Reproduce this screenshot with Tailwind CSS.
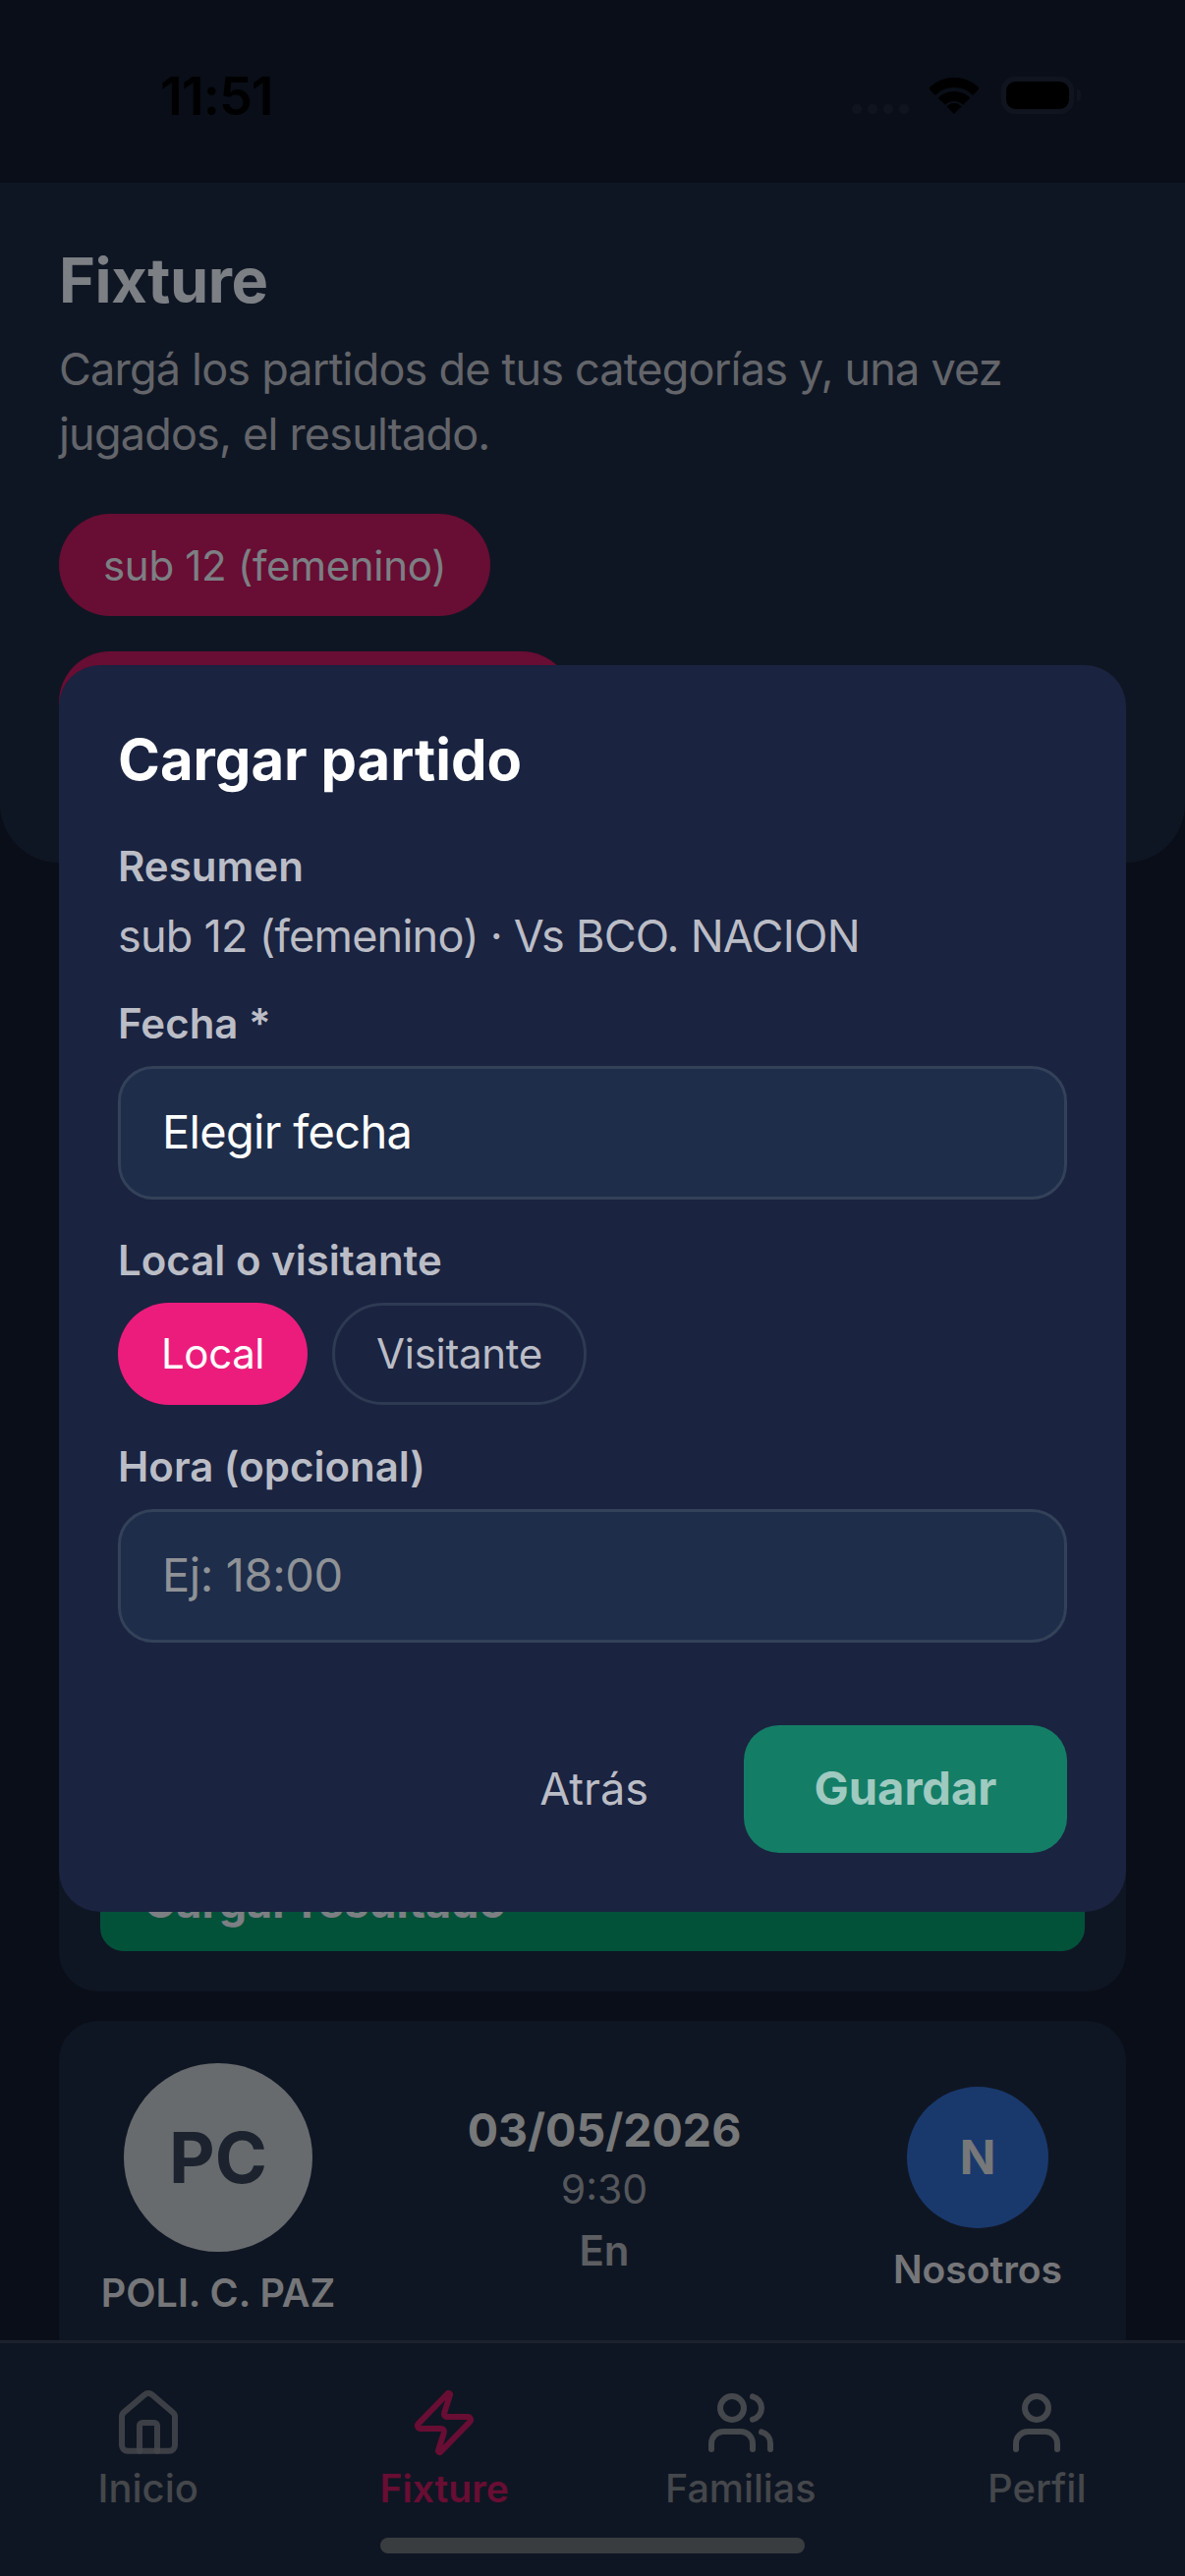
<!doctype html>
<html lang="es">
<head>
<meta charset="utf-8">
<script src="https://cdn.jsdelivr.net/npm/@tailwindcss/browser@4"></script>
</head>
<body class="bg-[#121a2c]">
<div class="relative w-[1206px] h-[2622px] overflow-hidden bg-[#121a2c] font-['Inter','Liberation_Sans',sans-serif]">

  <!-- status bar -->
  <div class="h-[186px] flex items-start justify-between text-black">
    <div class="mt-[68px] ml-[163px] text-[54px] leading-[60px] font-semibold tracking-[-1px]">11:51</div>
    <div class="mt-[78px] mr-[106px] flex items-start">
      <div class="mt-[28px] flex gap-[6px]">
        <span class="w-[10px] h-[10px] rounded-full bg-[#1d2638]"></span>
        <span class="w-[10px] h-[10px] rounded-full bg-[#1d2638]"></span>
        <span class="w-[10px] h-[10px] rounded-full bg-[#1d2638]"></span>
        <span class="w-[10px] h-[10px] rounded-full bg-[#1d2638]"></span>
      </div>
      <svg class="ml-[21px]" width="50" height="38" viewBox="0 0 50 38" fill="none" stroke="#000">
        <path d="M2.4 15.4 A32 32 0 0 1 47.6 15.4" stroke-width="10"/>
        <path d="M12.3 25.3 A18 18 0 0 1 37.7 25.3" stroke-width="10"/>
        <path d="M25 38 L17.5 30.5 A10 10 0 0 1 32.5 30.5 Z" fill="#000" stroke="none"/>
      </svg>
      <div class="ml-[23px] flex items-center">
        <div class="w-[74px] h-[38px] rounded-[14px] border-[5px] border-[#1d2638] bg-black bg-clip-padding"></div>
        <div class="ml-[3px] w-[4px] h-[12px] rounded-r-full bg-[#1d2638]"></div>
      </div>
    </div>
  </div>

  <!-- header -->
  <div class="h-[692px] bg-[#1d2840] rounded-b-[60px] px-[60px] pt-[63px] overflow-hidden">
    <h1 class="text-[63px] leading-[72px] font-bold tracking-[-0.4px] text-[#e2e8f0]">Fixture</h1>
    <p class="mt-[22px] text-[45px] leading-[66px] tracking-[-0.8px] text-[#b4b9c2] w-[1010px]">Cargá los partidos de tus categorías y, una vez jugados, el resultado.</p>
    <div class="mt-[48px] flex flex-col items-start gap-[36px]">
      <div class="h-[104px] px-[45px] flex items-center rounded-full bg-[#be185d] text-[42px] tracking-[-0.3px] text-[#e2e8f0]">sub 12 (femenino)</div>
      <div class="h-[104px] w-[523px] rounded-[52px] bg-[#be185d]"></div>
    </div>
  </div>

  <!-- card behind modal -->
  <div class="mx-[60px] mt-[30px] h-[1119px] rounded-[40px] bg-[#1d2840] flex flex-col justify-end px-[42px] pb-[41px]">
    <div class="h-[100px] rounded-[24px] bg-[#059669] px-[44px] flex items-center text-[45px] font-bold text-[#e2e8f0]">Cargar resultado</div>
  </div>

  <!-- match card -->
  <div class="mx-[60px] mt-[30px] h-[400px] rounded-t-[40px] bg-[#1d2840] flex items-start px-[42px] pt-[43px] text-[#e2e8f0]">
    <div class="w-[240px] shrink-0 flex flex-col items-center">
      <div class="w-[192px] h-[192px] rounded-full bg-[#bdc4c8] flex items-center justify-center text-[72px] font-bold text-[#334155]">PC</div>
      <div class="mt-[20px] text-[39.5px] leading-[44px] font-semibold text-[#d5d8dc] whitespace-nowrap">POLI. C. PAZ</div>
    </div>
    <div class="ml-[93px] w-[360px] shrink-0 flex flex-col items-center">
      <div class="mt-[44px] text-[46.5px] leading-[48px] font-bold text-[#d8dadd]">03/05/2026</div>
      <div class="mt-[12px] text-[41px] leading-[48px] text-[#9a9ea6]">9:30</div>
      <div class="mt-[14px] text-[42px] leading-[50px] font-semibold text-[#a8acb2]">En</div>
    </div>
    <div class="ml-[90px] w-[220px] shrink-0 flex flex-col items-center pt-[24px]">
      <div class="w-[144px] h-[144px] rounded-full bg-[#2f69c7] flex items-center justify-center text-[48px] font-bold text-[#d8dadd]">N</div>
      <div class="mt-[20px] text-[39px] leading-[44px] font-semibold text-[#d5d8dc]">Nosotros</div>
    </div>
  </div>

  <!-- tab bar -->
  <div class="absolute left-0 right-0 bottom-0 h-[240px] bg-[#1d2840] border-t-[3px] border-[#334155]">
    <div class="grid grid-cols-4 pt-[45px]">
      <div class="flex flex-col items-center text-[#7c8189]">
        <svg class="w-[72px] h-[72px]" viewBox="0 0 24 24" fill="none" stroke="#7c8189" stroke-opacity="0.85" stroke-width="2" stroke-linecap="round" stroke-linejoin="round"><path d="M15 21.6v-8.6a1 1 0 0 0-1-1h-4a1 1 0 0 0-1 1v8.6"/><path d="M3 10a2 2 0 0 1 .709-1.528l7-5.999a2 2 0 0 1 2.582 0l7 5.999A2 2 0 0 1 21 10v9.6a2 2 0 0 1-2 2H5a2 2 0 0 1-2-2z"/></svg>
        <span class="mt-[9px] text-[40px] leading-[44px] font-medium">Inicio</span>
      </div>
      <div class="flex flex-col items-center text-[#be185d]">
        <svg class="w-[72px] h-[72px]" viewBox="0 0 24 24" fill="none" stroke="#be185d" stroke-width="2" stroke-linecap="round" stroke-linejoin="round"><path d="M4 14a1 1 0 0 1-.78-1.63l9.9-10.2a.5.5 0 0 1 .86.46l-1.92 6.02A1 1 0 0 0 13 10h7a1 1 0 0 1 .78 1.63l-9.9 10.2a.5.5 0 0 1-.86-.46l1.92-6.02A1 1 0 0 0 11 14z"/></svg>
        <span class="mt-[9px] text-[39px] leading-[44px] font-semibold">Fixture</span>
      </div>
      <div class="flex flex-col items-center text-[#7c8189]">
        <svg class="w-[72px] h-[72px]" viewBox="0 0 24 24" fill="none" stroke="#7c8189" stroke-width="2" stroke-linecap="round" stroke-linejoin="round"><path d="M16 21v-2a4 4 0 0 0-4-4H6a4 4 0 0 0-4 4v2"/><circle cx="9" cy="7" r="4"/><path d="M22 21v-2a4 4 0 0 0-3-3.87"/><path d="M16 3.13a4 4 0 0 1 0 7.75"/></svg>
        <span class="mt-[9px] text-[39.5px] leading-[44px] font-medium">Familias</span>
      </div>
      <div class="flex flex-col items-center text-[#7c8189]">
        <svg class="w-[72px] h-[72px]" viewBox="0 0 24 24" fill="none" stroke="#7c8189" stroke-width="2" stroke-linecap="round" stroke-linejoin="round"><path d="M19 21v-2a4 4 0 0 0-4-4H9a4 4 0 0 0-4 4v2"/><circle cx="12" cy="7" r="4"/></svg>
        <span class="mt-[9px] text-[40px] leading-[44px] font-medium">Perfil</span>
      </div>
    </div>
    <div class="absolute left-[387px] top-[198px] w-[432px] h-[16px] rounded-full bg-[#6b6f76]"></div>
  </div>

  <!-- modal overlay -->
  <div class="absolute inset-0 bg-black/45 flex items-center justify-center">
    <div class="w-[1086px] h-[1269px] rounded-[42px] bg-[#1a2340] px-[60px] pt-[62px] flex flex-col">
      <h2 class="text-[58px] leading-[68px] font-bold text-white">Cargar partido</h2>
      <div class="mt-[51px] text-[42px] leading-[48px] font-semibold text-[#bbbdc6]">Resumen</div>
      <div class="mt-[22px] text-[45px] leading-[50px] tracking-[-0.75px] text-[#bbbdc6]">sub 12 (femenino) · Vs BCO. NACION</div>
      <div class="mt-[40px] text-[42px] leading-[48px] font-semibold text-[#bbbdc6]">Fecha *</div>
      <div class="mt-[19px] h-[136px] rounded-[36px] border-[3px] border-[#334159] bg-[#1e2d4a] px-[42px] flex items-center text-[47px] tracking-[-0.7px] text-white">Elegir fecha</div>
      <div class="mt-[38px] text-[42px] leading-[48px] font-semibold text-[#bbbdc6]">Local o visitante</div>
      <div class="mt-[19px] flex gap-[25px]">
        <div class="h-[104px] px-[44px] flex items-center rounded-full bg-[#ec1c7c] text-[42px] tracking-[-0.4px] text-white">Local</div>
        <div class="h-[104px] px-[42px] flex items-center rounded-full border-[3px] border-[#2e3a52] text-[42px] tracking-[-0.3px] text-[#bbbdc6]">Visitante</div>
      </div>
      <div class="mt-[39px] text-[42px] leading-[48px] font-semibold text-[#bbbdc6]">Hora (opcional)</div>
      <div class="mt-[19px] h-[136px] rounded-[36px] border-[3px] border-[#334159] bg-[#1e2d4a] px-[42px] flex items-center text-[47px] tracking-[-0.4px] text-[#8f9296]">Ej: 18:00</div>
      <div class="mt-[84px] flex items-center justify-end">
        <div class="text-[45px] leading-[54px] text-[#bbbdc6]">Atrás</div>
        <div class="ml-[97px] w-[329px] h-[130px] rounded-[36px] bg-[#10b981]/60 flex items-center justify-center text-[47px] font-bold text-white/60">Guardar</div>
      </div>
    </div>
  </div>
</div>
</body>
</html>
